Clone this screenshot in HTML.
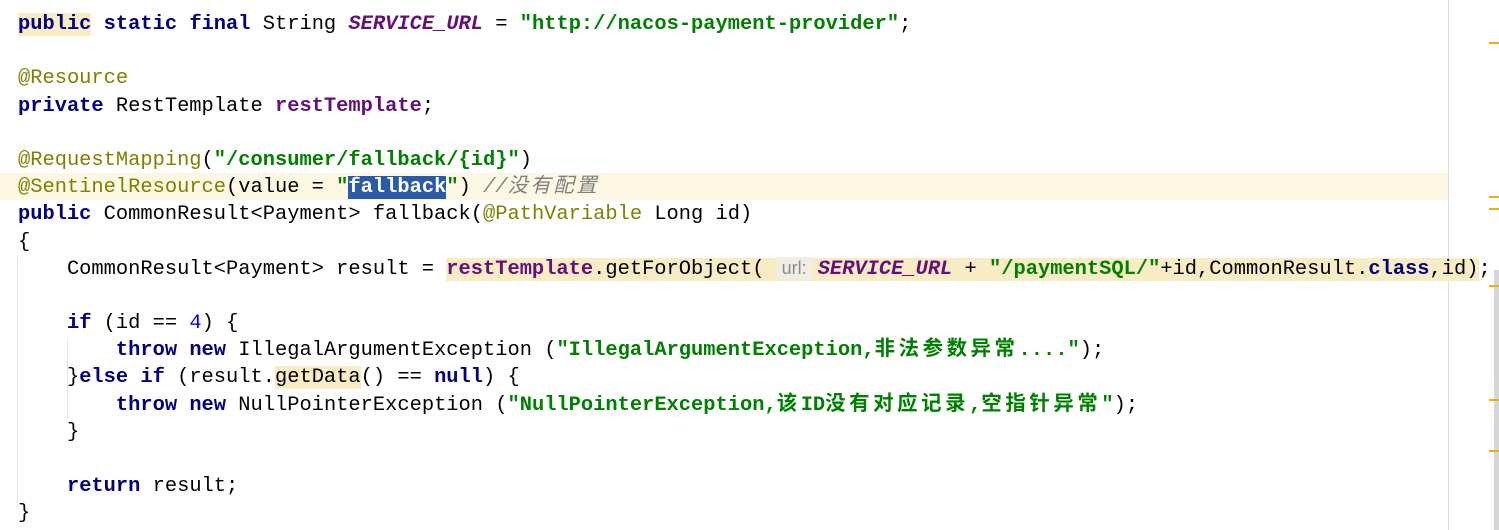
<!DOCTYPE html>
<html><head><meta charset="utf-8"><style>
html,body{margin:0;padding:0;background:#fff;width:1499px;height:530px;overflow:hidden;position:relative}
.code{position:absolute;left:18px;top:11px;font-family:"Liberation Mono","Noto Sans CJK SC",monospace;font-size:20.4px;line-height:27.2px;color:#000;letter-spacing:0}
.l{height:27.2px;white-space:pre}
.k{color:#000080;font-weight:bold}
.s{color:#008000;font-weight:bold}
.f{color:#660e7a;font-weight:bold;font-style:italic}
.fi{color:#660e7a;font-weight:bold}
.a{color:#808000}
.n{color:#0000ff}
.c{color:#808080;font-style:italic}
.cj{letter-spacing:3.6px}
.cc{letter-spacing:2.5px}
.hl{background:#f8ecc4}
.sel{background:#2a5aa8;color:#fff}
.hint{display:inline-block;font-family:"Liberation Sans",sans-serif;font-size:18px;color:#8a8a8a;background:#f0eee4;padding:0 5px;margin:0 6px 0 0;line-height:22px}
.row{position:absolute;left:0;width:1448px;top:173px;height:27px;background:#fdf7e4}
.guide{position:absolute;width:1px;background:#e6e6e6}
.vline{position:absolute;left:1448px;top:0;width:1px;height:530px;background:#dedede}
.mk{position:absolute;left:1489px;width:10px;height:2px;background:#e8b400}
.sb{position:absolute;left:1494px;top:270px;width:5px;height:260px;background:#d6d6d6}
</style></head><body>
<div class="row"></div>
<div class="guide" style="left:17px;top:257px;height:250px"></div>
<div class="guide" style="left:67px;top:339px;height:80px"></div>
<div class="vline"></div>
<div class="sb"></div>
<div class="mk" style="top:42px"></div>
<div class="mk" style="top:196px"></div>
<div class="mk" style="top:208px"></div>
<div class="mk" style="top:285px"></div>
<div class="mk" style="top:399px"></div>
<div class="mk" style="top:450px"></div>
<div class="code"><div class="l"><span class="k hl">public</span> <span class="k">static final</span> String <span class="f">SERVICE_URL</span> = <span class="s">"http://nacos-payment-provider"</span>;</div><div class="l"> </div><div class="l"><span class="a">@Resource</span></div><div class="l"><span class="k">private</span> RestTemplate <span class="fi">restTemplate</span>;</div><div class="l"> </div><div class="l"><span class="a">@RequestMapping</span>(<span class="s">"/consumer/fallback/{id}"</span>)</div><div class="l"><span class="a">@SentinelResource</span>(value = <span class="s">"</span><span class="s sel">fallback</span><span class="s">"</span>) <span class="c">//<span class="cc">没有配置</span></span></div><div class="l"><span class="k">public</span> CommonResult&lt;Payment&gt; fallback(<span class="a">@PathVariable</span> Long id)</div><div class="l">{</div><div class="l">    CommonResult&lt;Payment&gt; result = <span class="hl"><span class="fi">restTemplate</span>.getForObject( <span class="hint">url:</span><span class="f">SERVICE_URL</span> + <span class="s">"/paymentSQL/"</span>+id,CommonResult.<span class="k">class</span>,id)</span>;</div><div class="l"> </div><div class="l">    <span class="k">if</span> (id == <span class="n">4</span>) {</div><div class="l">        <span class="k">throw new</span> IllegalArgumentException (<span class="s">"IllegalArgumentException,<span class="cj">非法参数异常</span>...."</span>);</div><div class="l">    }<span class="k">else if</span> (result.<span class="hl">getData</span>() == <span class="k">null</span>) {</div><div class="l">        <span class="k">throw new</span> NullPointerException (<span class="s">"NullPointerException,<span class="cj">该</span>ID<span class="cj">没有对应记录</span>,<span class="cj">空指针异常</span>"</span>);</div><div class="l">    }</div><div class="l"> </div><div class="l">    <span class="k">return</span> result;</div><div class="l">}</div></div>
</body></html>
